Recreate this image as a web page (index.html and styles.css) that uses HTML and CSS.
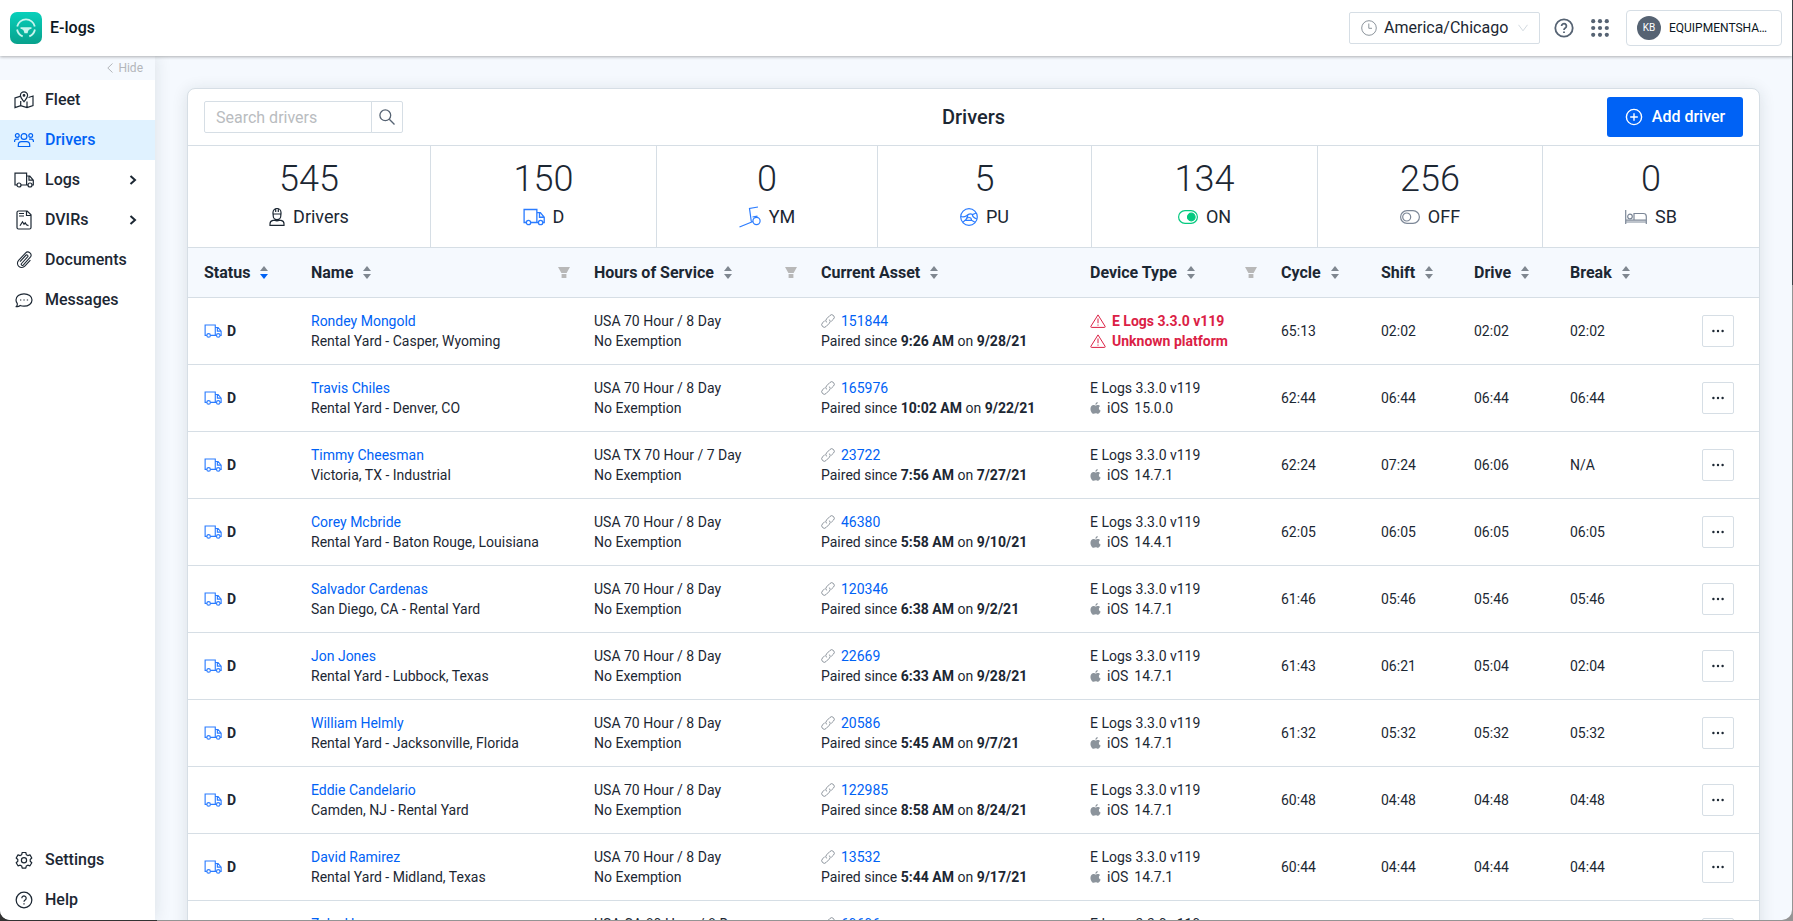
FILE: index.html
```
<!DOCTYPE html>
<html lang="en">
<head>
    <meta charset="UTF-8">
    <meta name="viewport" content="width=device-width, initial-scale=1.0">
    <title>E-logs - Drivers</title>
    <link rel="stylesheet" href="styles.css">
</head>
<body>
    <!-- Shared icons -->
    <svg class="sprite" aria-hidden="true">
        <symbol id="truck" viewBox="0 0 20 16">
            <path d="M3 13H1V1.2h11.6V13H7M12.6 4h3.2l3.5 4.2V13H18M14 13h-1.4M15 4v4.2h4.3"/>
            <circle cx="5" cy="13" r="2"/>
            <circle cx="16" cy="13" r="2"/>
        </symbol>
        <symbol id="sort" viewBox="0 0 8 13">
            <path class="up" d="M0 5 4 0l4 5z"/>
            <path class="down" d="M0 8h8l-4 5z"/>
        </symbol>
        <symbol id="filter" viewBox="0 0 12 11">
            <path d="M0 0h12L8.600 6H3.400zM3.600 7h4.800v4H3.600z"/>
        </symbol>
        <symbol id="link" viewBox="0 0 14 14">
            <path d="M5.6 8.4a2.6 2.6 0 0 1 0-3.6L8.9 1.5a2.54 2.54 0 0 1 3.6 3.6L10.2 7.4M8.4 5.6a2.6 2.6 0 0 1 0 3.6L5.1 12.5a2.54 2.54 0 0 1-3.6-3.6L3.8 6.6"/>
        </symbol>
        <symbol id="warning" viewBox="0 0 16 14">
            <path d="M8 .9.9 12.3q-.4 1.1.7 1.1h12.8q1.1 0 .7-1.1zM8 4.5v4.7M8 10.5v1.2"/>
        </symbol>
        <symbol id="apple" viewBox="0 0 12 13">
            <path d="M8.4 0C8.5 1.5 7.3 3 5.9 3 5.7 1.6 7 .2 8.4 0zM6.1 3.8c.6 0 1.3-.7 2.5-.7 1 0 1.9.5 2.500 1.300-2.100 1.300-1.700 4.100.5 4.900-.6 1.700-1.700 3.500-3 3.500-.9 0-1.300-.5-2.300-.5s-1.500.5-2.400.5C2.300 12.800.5 10.200.5 7.300c0-2.800 1.700-4.200 3.300-4.200 1.100 0 1.700.7 2.300.7z"/>
        </symbol>
        <symbol id="question" viewBox="0 0 20 20">
            <circle cx="10" cy="10" r="8.7"/>
            <path d="M7.600 8a2.400 2.400 0 1 1 3.700 2c-.9.6-1.300 1-1.300 2M10 13.600v1.300"/>
        </symbol>
        <symbol id="chevron" viewBox="0 0 6 8">
            <path d="m1 .8 3.600 3.200L1 7.200"/>
        </symbol>
        <symbol id="dots" viewBox="0 0 12 4">
            <circle cx="1.400" cy="2" r="1.200"/><circle cx="6" cy="2" r="1.200"/><circle cx="10.600" cy="2" r="1.200"/>
        </symbol>
    </svg>

    <div class="app">
        <header class="top-bar">
            <div class="brand">
                <svg class="logo" viewBox="0 0 32 32">
                    <defs>
                        <linearGradient id="logoFill" x1="0" y1="0" x2="0" y2="1">
                            <stop offset="0" stop-color="#08d0bb"/>
                            <stop offset="1" stop-color="#08a18c"/>
                        </linearGradient>
                    </defs>
                    <rect width="32" height="32" rx="7" fill="url(#logoFill)"/>
                    <path d="M7.200 14.500a9 9 0 0 1 17.600 0M7.100 17.500a9 9 0 0 0 5.600 6.900M24.900 17.500a9 9 0 0 1-5.600 6.900" fill="none" stroke="#c9f5ee" stroke-width="1.800"/>
                    <path d="M10.500 15.200h11v1.500c-2.300.3-3.700 1.700-3.900 4.600h-3.200c-.2-2.900-1.600-4.300-3.900-4.600z" fill="#c9f5ee"/>
                </svg>
                <span>E-logs</span>
            </div>
            <div class="top-actions">
                <label class="timezone">
                    <svg class="clock" viewBox="0 0 16 16"><circle cx="8" cy="8" r="7.300"/><path d="M7.800 3.500v4.800H11"/></svg>
                    <select aria-label="Time zone">
                        <option>America/Chicago</option>
                    </select>
                    <svg class="caret" viewBox="0 0 10 8"><path d="m.5.8 4.500 6 4.500-6"/></svg>
                </label>
                <button class="icon-button" aria-label="Help"><svg class="help-icon"><use href="#question"/></svg></button>
                <button class="icon-button" aria-label="Apps">
                    <svg class="apps-icon" viewBox="0 0 18 18">
                        <circle cx="2.200" cy="2.200" r="2.100"/><circle cx="9" cy="2.200" r="2.100"/><circle cx="15.800" cy="2.200" r="2.100"/>
                        <circle cx="2.200" cy="9" r="2.100"/><circle cx="9" cy="9" r="2.100"/><circle cx="15.800" cy="9" r="2.100"/>
                        <circle cx="2.200" cy="15.800" r="2.100"/><circle cx="9" cy="15.800" r="2.100"/><circle cx="15.800" cy="15.800" r="2.100"/>
                    </svg>
                </button>
                <button class="account"><span class="avatar">KB</span><span>EQUIPMENTSHA…</span></button>
            </div>
        </header>

        <div class="body">
            <nav class="sidebar">
                <button class="hide-button">
                    <svg viewBox="0 0 6 10"><path d="M5.500.5.800 5l4.700 4.500"/></svg>
                    Hide
                </button>
                <a class="nav-item" href="#fleet">
                    <svg viewBox="0 0 20 18">
                        <path d="M6 5.400 1 7v9.600l5.700-2 6.300 2 6-2V5l-4.500 1.500M6.700 10v4.600M13 10.500v6.100M10 10.700C8 8 6.400 6.400 6.400 4.400a3.600 3.600 0 0 1 7.200 0c0 2-1.600 3.600-3.600 6.300z"/>
                        <circle cx="10" cy="4.400" r=".8"/>
                    </svg>
                    Fleet
                </a>
                <a class="nav-item active" href="#drivers">
                    <svg viewBox="0 0 20 16">
                        <circle cx="10" cy="4.500" r="2.900"/><circle cx="3.300" cy="3.500" r="1.900"/><circle cx="16.700" cy="3.500" r="1.900"/>
                        <path d="M4.300 14.500v-1.500q0-3.300 3.200-3.300h5q3.200 0 3.200 3.300v1.500zM.6 10V9.200q0-2 2-2H5M19.400 10V9.200q0-2-2-2H15"/>
                    </svg>
                    Drivers
                </a>
                <a class="nav-item" href="#logs">
                    <svg><use href="#truck"/></svg>
                    Logs
                    <svg class="chevron"><use href="#chevron"/></svg>
                </a>
                <a class="nav-item" href="#dvirs">
                    <svg class="tall" viewBox="0 0 20 20">
                        <path d="M3 2.500Q3 1 4.500 1h8.700L17 4.800v12.700q0 1.500-1.500 1.500h-11Q3 19 3 17.500zM12.500 1v4.500H17M5 3.500h5M5 6h5M6 15.800l2.500-4 1.500 2.500 1.200-1.500 1.300 2 2 .8"/>
                    </svg>
                    DVIRs
                    <svg class="chevron"><use href="#chevron"/></svg>
                </a>
                <a class="nav-item" href="#documents">
                    <svg viewBox="0 0 20 20">
                        <path d="M14.500 6 7.300 13.900a1.200 1.200 0 0 0 1.800 1.700l7.700-8.500a3.500 3.500 0 0 0-5.200-4.800L4 10.500a4.700 4.700 0 0 0 6.900 6.400l6.200-6.800M14.500 6a1.500 1.500 0 0 0-2.200-1.500l-6.700 7.300"/>
                    </svg>
                    Documents
                </a>
                <a class="nav-item" href="#messages">
                    <svg viewBox="0 0 20 18">
                        <path d="M2.300 15.600q1.400-1.400 1-3C2.500 11.500 2 10.400 2 9c0-3.600 3.500-6.200 8-6.200s8 2.600 8 6.200-3.500 6.200-8 6.200c-1.500 0-2.700-.2-3.800-.7-1.200 1-2.500 1.400-3.900 1.100zM6 9h1.300M9.400 9h1.300M12.800 9h1.300"/>
                    </svg>
                    Messages
                </a>
                <div class="nav-bottom">
                    <a class="nav-item" href="#settings">
                        <svg class="tall" viewBox="0 0 20 20">
                            <path d="M8.200 2.500h3.600l.5 2.200 1.500.9 2.200-.7 1.800 3.100L16.200 9.500v1.700l1.600 1.500-1.800 3.100-2.200-.6-1.500.8-.5 2.200H8.200L7.700 16l-1.500-.8-2.200.6-1.800-3.100 1.600-1.500V9.500L2.200 8 4 4.900l2.200.7 1.500-.9z" stroke-linejoin="round"/>
                            <circle cx="10" cy="10.300" r="2.600"/>
                        </svg>
                        Settings
                    </a>
                    <a class="nav-item" href="#help">
                        <svg class="nav-help"><use href="#question"/></svg>
                        Help
                    </a>
                </div>
            </nav>

            <main class="content">
                <section class="card">
                    <div class="toolbar">
                        <form class="search">
                            <input type="text" placeholder="Search drivers" aria-label="Search drivers">
                            <button type="button" aria-label="Search">
                                <svg viewBox="0 0 16 16"><circle cx="6.300" cy="6.300" r="5.400"/><path d="m10.300 10.300 5.200 5.200"/></svg>
                            </button>
                        </form>
                        <h1>Drivers</h1>
                        <button class="add-button">
                            <svg viewBox="0 0 18 18"><circle cx="9" cy="9" r="7.600"/><path d="M9 5.200v7.600M5.200 9h7.600"/></svg>
                            Add driver
                        </button>
                    </div>

                    <div class="stats">
                        <div class="stat">
                            <strong>545</strong>
                            <span>
                                <svg class="person" viewBox="0 0 16 18"><path d="M4 6.200V4.500a4 4 0 0 1 8 0v1.700M3.400 6h9.200M6.700 1v3M9.300 1v3M4.200 6.200v1.600a3.800 3.800 0 0 0 7.600 0V6.200M1 17.300v-1.500q0-2.900 3-3.400l1.500-.2q2.500 1.200 5 0l1.500.2q3 .5 3 3.400v1.500z"/></svg>
                                Drivers
                            </span>
                        </div>
                        <div class="stat">
                            <strong>150</strong>
                            <span><svg class="blue"><use href="#truck"/></svg>D</span>
                        </div>
                        <div class="stat">
                            <strong>0</strong>
                            <span>
                                <svg class="blue yard" viewBox="0 0 22 22"><path d="M.5 21 14 15.500M19 1l-8.500 1.500L12.300 15.500M13.500 11l5-.8"/><circle cx="17.500" cy="15" r="3.600"/></svg>
                                YM
                            </span>
                        </div>
                        <div class="stat">
                            <strong>5</strong>
                            <span>
                                <svg class="blue wheel" viewBox="0 0 18 18"><circle cx="9" cy="9" r="8.300"/><path d="M.800 8.500q3 1 5.700-.8Q9.500 5 12.500 6.500L16.300 5M8 7.500q-.8 3.500-5 6.800M12.500 6.500q-.5 2.500 4.300 4.500M5.500 12.300q1.500-2.800 3.500-2.800 2.500 0 2.500 2.800zM11.500 12.300l3.500 2"/></svg>
                                PU
                            </span>
                        </div>
                        <div class="stat">
                            <strong>134</strong>
                            <span>
                                <svg class="toggle on" viewBox="0 0 20 14"><rect x=".6" y=".6" width="18.800" height="12.800" rx="6.400"/><circle cx="13.300" cy="7" r="3.800"/></svg>
                                ON
                            </span>
                        </div>
                        <div class="stat">
                            <strong>256</strong>
                            <span>
                                <svg class="toggle" viewBox="0 0 20 14"><rect x=".6" y=".6" width="18.800" height="12.800" rx="6.400"/><circle cx="6.700" cy="7" r="4"/></svg>
                                OFF
                            </span>
                        </div>
                        <div class="stat">
                            <strong>0</strong>
                            <span>
                                <svg class="bed" viewBox="0 0 22 14"><path d="M.7 0v14M.7 12h20.600M21.300 14V6.500q0-3-3-3H9v6.700M.7 10.200h20.600"/><circle cx="5" cy="6.500" r="2.300"/></svg>
                                SB
                            </span>
                        </div>
                    </div>

                    <table class="drivers">
                        <colgroup>
                            <col class="col-status"><col class="col-name"><col class="col-hours"><col class="col-asset"><col class="col-device">
                            <col class="col-cycle"><col class="col-shift"><col class="col-drive"><col class="col-break"><col class="col-menu">
                        </colgroup>
                        <thead>
                            <tr>
                                <th><div><button class="sort desc">Status <svg><use href="#sort"/></svg></button></div></th>
                                <th><div><button class="sort">Name <svg><use href="#sort"/></svg></button><button class="filter" aria-label="Filter by name"><svg><use href="#filter"/></svg></button></div></th>
                                <th><div><button class="sort">Hours of Service <svg><use href="#sort"/></svg></button><button class="filter" aria-label="Filter by hours"><svg><use href="#filter"/></svg></button></div></th>
                                <th><div><button class="sort">Current Asset <svg><use href="#sort"/></svg></button></div></th>
                                <th><div><button class="sort">Device Type <svg><use href="#sort"/></svg></button><button class="filter" aria-label="Filter by device"><svg><use href="#filter"/></svg></button></div></th>
                                <th><div><button class="sort">Cycle <svg><use href="#sort"/></svg></button></div></th>
                                <th><div><button class="sort">Shift <svg><use href="#sort"/></svg></button></div></th>
                                <th><div><button class="sort">Drive <svg><use href="#sort"/></svg></button></div></th>
                                <th><div><button class="sort">Break <svg><use href="#sort"/></svg></button></div></th>
                                <th></th>
                            </tr>
                        </thead>
                        <tbody>
                            <tr>
                                <td><div class="status"><svg><use href="#truck"/></svg>D</div></td>
                                <td><a href="#driver">Rondey Mongold</a><br>Rental Yard - Casper, Wyoming</td>
                                <td>USA 70 Hour / 8 Day<br>No Exemption</td>
                                <td><a class="asset" href="#asset"><svg><use href="#link"/></svg>151844</a>Paired since <b>9:26 AM</b> on <b>9/28/21</b></td>
                                <td class="alert"><div><svg><use href="#warning"/></svg>E Logs 3.3.0 v119</div><div><svg><use href="#warning"/></svg>Unknown platform</div></td>
                                <td>65:13</td><td>02:02</td><td>02:02</td><td>02:02</td>
                                <td><button class="menu" aria-label="More"><svg><use href="#dots"/></svg></button></td>
                            </tr>
                            <tr>
                                <td><div class="status"><svg><use href="#truck"/></svg>D</div></td>
                                <td><a href="#driver">Travis Chiles</a><br>Rental Yard - Denver, CO</td>
                                <td>USA 70 Hour / 8 Day<br>No Exemption</td>
                                <td><a class="asset" href="#asset"><svg><use href="#link"/></svg>165976</a>Paired since <b>10:02 AM</b> on <b>9/22/21</b></td>
                                <td>E Logs 3.3.0 v119<div class="os"><svg><use href="#apple"/></svg><span>iOS</span><span>15.0.0</span></div></td>
                                <td>62:44</td><td>06:44</td><td>06:44</td><td>06:44</td>
                                <td><button class="menu" aria-label="More"><svg><use href="#dots"/></svg></button></td>
                            </tr>
                            <tr>
                                <td><div class="status"><svg><use href="#truck"/></svg>D</div></td>
                                <td><a href="#driver">Timmy Cheesman</a><br>Victoria, TX - Industrial</td>
                                <td>USA TX 70 Hour / 7 Day<br>No Exemption</td>
                                <td><a class="asset" href="#asset"><svg><use href="#link"/></svg>23722</a>Paired since <b>7:56 AM</b> on <b>7/27/21</b></td>
                                <td>E Logs 3.3.0 v119<div class="os"><svg><use href="#apple"/></svg><span>iOS</span><span>14.7.1</span></div></td>
                                <td>62:24</td><td>07:24</td><td>06:06</td><td>N/A</td>
                                <td><button class="menu" aria-label="More"><svg><use href="#dots"/></svg></button></td>
                            </tr>
                            <tr>
                                <td><div class="status"><svg><use href="#truck"/></svg>D</div></td>
                                <td><a href="#driver">Corey Mcbride</a><br>Rental Yard - Baton Rouge, Louisiana</td>
                                <td>USA 70 Hour / 8 Day<br>No Exemption</td>
                                <td><a class="asset" href="#asset"><svg><use href="#link"/></svg>46380</a>Paired since <b>5:58 AM</b> on <b>9/10/21</b></td>
                                <td>E Logs 3.3.0 v119<div class="os"><svg><use href="#apple"/></svg><span>iOS</span><span>14.4.1</span></div></td>
                                <td>62:05</td><td>06:05</td><td>06:05</td><td>06:05</td>
                                <td><button class="menu" aria-label="More"><svg><use href="#dots"/></svg></button></td>
                            </tr>
                            <tr>
                                <td><div class="status"><svg><use href="#truck"/></svg>D</div></td>
                                <td><a href="#driver">Salvador Cardenas</a><br>San Diego, CA - Rental Yard</td>
                                <td>USA 70 Hour / 8 Day<br>No Exemption</td>
                                <td><a class="asset" href="#asset"><svg><use href="#link"/></svg>120346</a>Paired since <b>6:38 AM</b> on <b>9/2/21</b></td>
                                <td>E Logs 3.3.0 v119<div class="os"><svg><use href="#apple"/></svg><span>iOS</span><span>14.7.1</span></div></td>
                                <td>61:46</td><td>05:46</td><td>05:46</td><td>05:46</td>
                                <td><button class="menu" aria-label="More"><svg><use href="#dots"/></svg></button></td>
                            </tr>
                            <tr>
                                <td><div class="status"><svg><use href="#truck"/></svg>D</div></td>
                                <td><a href="#driver">Jon Jones</a><br>Rental Yard - Lubbock, Texas</td>
                                <td>USA 70 Hour / 8 Day<br>No Exemption</td>
                                <td><a class="asset" href="#asset"><svg><use href="#link"/></svg>22669</a>Paired since <b>6:33 AM</b> on <b>9/28/21</b></td>
                                <td>E Logs 3.3.0 v119<div class="os"><svg><use href="#apple"/></svg><span>iOS</span><span>14.7.1</span></div></td>
                                <td>61:43</td><td>06:21</td><td>05:04</td><td>02:04</td>
                                <td><button class="menu" aria-label="More"><svg><use href="#dots"/></svg></button></td>
                            </tr>
                            <tr>
                                <td><div class="status"><svg><use href="#truck"/></svg>D</div></td>
                                <td><a href="#driver">William Helmly</a><br>Rental Yard - Jacksonville, Florida</td>
                                <td>USA 70 Hour / 8 Day<br>No Exemption</td>
                                <td><a class="asset" href="#asset"><svg><use href="#link"/></svg>20586</a>Paired since <b>5:45 AM</b> on <b>9/7/21</b></td>
                                <td>E Logs 3.3.0 v119<div class="os"><svg><use href="#apple"/></svg><span>iOS</span><span>14.7.1</span></div></td>
                                <td>61:32</td><td>05:32</td><td>05:32</td><td>05:32</td>
                                <td><button class="menu" aria-label="More"><svg><use href="#dots"/></svg></button></td>
                            </tr>
                            <tr>
                                <td><div class="status"><svg><use href="#truck"/></svg>D</div></td>
                                <td><a href="#driver">Eddie Candelario</a><br>Camden, NJ - Rental Yard</td>
                                <td>USA 70 Hour / 8 Day<br>No Exemption</td>
                                <td><a class="asset" href="#asset"><svg><use href="#link"/></svg>122985</a>Paired since <b>8:58 AM</b> on <b>8/24/21</b></td>
                                <td>E Logs 3.3.0 v119<div class="os"><svg><use href="#apple"/></svg><span>iOS</span><span>14.7.1</span></div></td>
                                <td>60:48</td><td>04:48</td><td>04:48</td><td>04:48</td>
                                <td><button class="menu" aria-label="More"><svg><use href="#dots"/></svg></button></td>
                            </tr>
                            <tr>
                                <td><div class="status"><svg><use href="#truck"/></svg>D</div></td>
                                <td><a href="#driver">David Ramirez</a><br>Rental Yard - Midland, Texas</td>
                                <td>USA 70 Hour / 8 Day<br>No Exemption</td>
                                <td><a class="asset" href="#asset"><svg><use href="#link"/></svg>13532</a>Paired since <b>5:44 AM</b> on <b>9/17/21</b></td>
                                <td>E Logs 3.3.0 v119<div class="os"><svg><use href="#apple"/></svg><span>iOS</span><span>14.7.1</span></div></td>
                                <td>60:44</td><td>04:44</td><td>04:44</td><td>04:44</td>
                                <td><button class="menu" aria-label="More"><svg><use href="#dots"/></svg></button></td>
                            </tr>
                            <tr>
                                <td></td>
                                <td><a href="#driver">Zeke H</a><br>&nbsp;</td>
                                <td>USA CA 80 Hour / 8 Day<br>&nbsp;</td>
                                <td><a class="asset" href="#asset"><svg><use href="#link"/></svg>69696</a>&nbsp;</td>
                                <td>E Logs 3.3.0 v119<br>&nbsp;</td>
                                <td></td><td></td><td></td><td></td>
                                <td><button class="menu" aria-label="More"><svg><use href="#dots"/></svg></button></td>
                            </tr>
                        </tbody>
                    </table>
                </section>
            </main>
        </div>
    </div>
</body>
</html>
```
FILE: styles.css
```
* {
    box-sizing: border-box;
}

body {
    margin: 0;
    height: 100vh;
    padding: 0 1px 1px 0;
    overflow: hidden;
    font-family: Roboto, "Liberation Sans", sans-serif;
    font-size: 14px;
    line-height: 20px;
    color: #1c2733;
    background:
        linear-gradient(#333, #333) left bottom / 157px 20px no-repeat,
        linear-gradient(#3f4247 285px, #949494 285px);
}

button,
input,
select {
    font: inherit;
    color: inherit;
}

button {
    padding: 0;
    border: none;
    background: none;
    cursor: pointer;
}

a {
    color: #0062f5;
    text-decoration: none;
}

svg {
    display: block;
    flex-shrink: 0;
    fill: none;
    stroke: currentColor;
}

.sprite {
    display: none;
}

.app {
    height: 100%;
    display: flex;
    flex-direction: column;
    overflow: hidden;
    border-radius: 0 0 10px 10px;
    background-color: #f5f9fe;
}

/* Top bar */
.top-bar {
    position: relative;
    z-index: 2;
    height: 56px;
    flex-shrink: 0;
    padding: 0 10px;
    display: flex;
    align-items: center;
    justify-content: space-between;
    background-color: #fff;
    box-shadow: 0 1px 3px rgba(0, 0, 0, 0.3);
}

.brand {
    display: flex;
    align-items: center;
    gap: 8px;
    font-size: 16px;
    font-weight: 500;
    color: #0b1622;
}

.logo {
    width: 32px;
    height: 32px;
    stroke: none;
}

.top-actions {
    display: flex;
    align-items: center;
    color: #566373;
}

.timezone {
    width: 191px;
    height: 32px;
    padding: 0 11px;
    margin-right: 14px;
    display: flex;
    align-items: center;
    gap: 7px;
    border: 1px solid #d6dee5;
    border-radius: 2px;
}

.timezone select {
    flex: 1;
    min-width: 0;
    padding: 0;
    border: none;
    appearance: none;
    background: none;
    font-size: 16px;
    color: #1c2733;
}

.clock {
    width: 16px;
    height: 16px;
    color: #8c949c;
}

.caret {
    width: 10px;
    height: 8px;
    color: #d3dae0;
}

.icon-button {
    margin-right: 17px;
}

.help-icon {
    width: 20px;
    height: 20px;
    stroke-width: 1.8;
}

.apps-icon {
    width: 18px;
    height: 18px;
    fill: currentColor;
    stroke: none;
}

.account {
    width: 156px;
    height: 36px;
    padding: 0 10px;
    display: flex;
    align-items: center;
    gap: 8px;
    border: 1px solid #d6dee5;
    border-radius: 4px;
    font-size: 12px;
    color: #0b1622;
}

.avatar {
    width: 24px;
    height: 24px;
    border-radius: 50%;
    background-color: #566373;
    color: #fff;
    font-size: 10px;
    line-height: 24px;
}

.body {
    flex: 1;
    min-height: 0;
    display: flex;
}

/* Sidebar */
.sidebar {
    width: 155px;
    flex-shrink: 0;
    display: flex;
    flex-direction: column;
    background-color: #fff;
    box-shadow: 0 0 16px rgba(28, 39, 51, 0.12);
}

.hide-button {
    height: 24px;
    padding-right: 12px;
    display: flex;
    align-items: center;
    justify-content: flex-end;
    gap: 5px;
    background-color: #f5f9fe;
    color: #b3b6ba;
    font-size: 12px;
}

.hide-button svg {
    width: 6px;
    height: 10px;
}

.nav-item {
    height: 40px;
    padding: 0 18px 0 14px;
    display: flex;
    align-items: center;
    gap: 11px;
    font-size: 16px;
    font-weight: 500;
    color: #1c2733;
}

.nav-item svg {
    width: 20px;
    height: 18px;
    stroke-width: 1.2;
}

.nav-item .tall {
    height: 20px;
}

.nav-item .nav-help {
    stroke-width: 1.4;
}

.nav-item .chevron {
    width: 8px;
    height: 10px;
    margin-left: auto;
    stroke-width: 1.6;
}

.nav-item.active {
    background-color: #e0f2ff;
    color: #0062f5;
}

.nav-bottom {
    margin-top: auto;
}

/* Drivers card */
.content {
    flex: 1;
    min-width: 0;
    padding: 32px;
    overflow: hidden;
}

.card {
    border: 1px solid #d6dee5;
    border-radius: 8px;
    overflow: hidden;
    background-color: #fff;
    box-shadow: 0 2px 16px rgba(28, 39, 51, 0.12);
}

.toolbar {
    height: 57px;
    padding: 0 16px;
    display: grid;
    grid-template-columns: 1fr auto 1fr;
    align-items: center;
    border-bottom: 1px solid #d6dee5;
}

.toolbar h1 {
    margin: 0;
    font-size: 20px;
    font-weight: 500;
}

.search {
    display: flex;
}

.search input {
    width: 168px;
    height: 32px;
    padding: 0 11px;
    border: 1px solid #d6dee5;
    border-radius: 2px 0 0 2px;
    outline: none;
    font-size: 16px;
}

.search input::placeholder {
    color: #b9bcc0;
}

.search button {
    width: 32px;
    height: 32px;
    margin-left: -1px;
    display: grid;
    place-items: center;
    border: 1px solid #d6dee5;
    border-radius: 0 2px 2px 0;
    color: #566373;
}

.search svg {
    width: 16px;
    height: 16px;
    stroke-width: 1.3;
}

.add-button {
    width: 136px;
    height: 40px;
    justify-self: end;
    display: flex;
    align-items: center;
    justify-content: center;
    gap: 9px;
    border-radius: 3px;
    background-color: #0062f5;
    color: #fff;
    font-size: 16px;
    font-weight: 500;
}

.add-button svg {
    width: 18px;
    height: 18px;
    stroke-width: 1.4;
}

.stats {
    display: grid;
    grid-template-columns: 242fr 226fr 221fr 214fr 226fr 225fr 217fr;
    border-bottom: 1px solid #d6dee5;
}

.stat {
    height: 101px;
    padding-top: 13px;
    text-align: center;
}

.stat + .stat {
    border-left: 1px solid #d6dee5;
}

.stat strong {
    display: block;
    font-size: 36px;
    font-weight: 300;
    line-height: 40px;
}

.stat span {
    height: 36px;
    display: flex;
    align-items: center;
    justify-content: center;
    gap: 8px;
    font-size: 18px;
}

.stat svg {
    width: 22px;
    height: 18px;
    stroke-width: 1.2;
}

.stat .person {
    width: 16px;
}

.stat .wheel {
    width: 18px;
}

.stat .yard {
    height: 22px;
}

.stat .toggle {
    width: 20px;
    height: 14px;
    color: #7c8797;
}

.stat .on {
    color: #04c97f;
}

.on circle {
    fill: currentColor;
}

.stat .bed {
    height: 14px;
    color: #7c8797;
}

.blue {
    color: #2b7cff;
}

/* Table */
.drivers {
    width: 100%;
    table-layout: fixed;
    border-collapse: separate;
    border-spacing: 0;
}

.col-status { width: 107px; }
.col-name { width: 283px; }
.col-hours { width: 227px; }
.col-asset { width: 269px; }
.col-device { width: 191px; }
.col-cycle { width: 100px; }
.col-shift { width: 93px; }
.col-drive { width: 96px; }
.col-break { width: 148px; }
.col-menu { width: 57px; }

.drivers th {
    height: 50px;
    padding: 0 8px 0 16px;
    border-bottom: 1px solid #d6dee5;
    background-color: #f5f9fe;
}

.drivers th div {
    display: flex;
    align-items: center;
    justify-content: space-between;
}

.sort {
    display: flex;
    align-items: center;
    gap: 10px;
    font-size: 16px;
    font-weight: 700;
    white-space: nowrap;
}

.sort svg {
    width: 8px;
    height: 13px;
    fill: #7f8790;
    stroke: none;
}

.down {
    fill: var(--down, #7f8790);
}

.sort.desc {
    --down: #0062f5;
}

.filter svg {
    width: 12px;
    height: 11px;
    fill: #b8b8b8;
    stroke: none;
}

.drivers td {
    height: 67px;
    padding: 0 0 0 16px;
    border-bottom: 1px solid #d6dee5;
    white-space: nowrap;
}

.drivers td:last-child {
    padding: 0;
}

.status {
    display: flex;
    align-items: center;
    gap: 5px;
    font-weight: 700;
}

.status svg {
    width: 18px;
    height: 14px;
    stroke-width: 1.3;
    color: #2b7cff;
}

.asset {
    display: flex;
    align-items: center;
    gap: 6px;
}

.asset svg {
    width: 14px;
    height: 14px;
    color: #8c949c;
}

.alert {
    color: #db2145;
    font-weight: 700;
}

.alert div,
.os {
    display: flex;
    align-items: center;
    gap: 6px;
}

.alert svg {
    width: 16px;
    height: 14px;
}

.os svg {
    width: 11px;
    height: 12px;
    fill: #8c949c;
    stroke: none;
}

.menu {
    width: 32px;
    height: 32px;
    display: grid;
    place-items: center;
    border: 1px solid #d6dee5;
    border-radius: 2px;
}

.menu svg {
    width: 12px;
    height: 4px;
    fill: currentColor;
    stroke: none;
}
```
